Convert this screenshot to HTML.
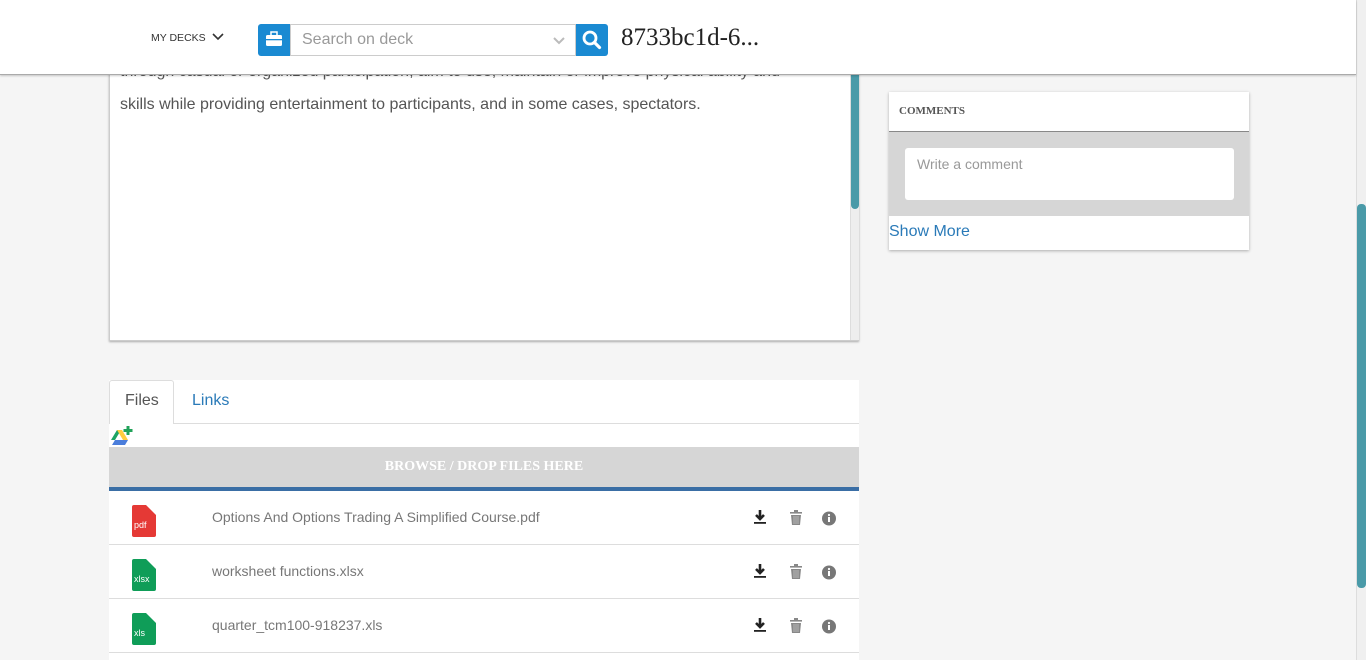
<!DOCTYPE html>
<html style="height:660px;overflow:hidden"><head><meta charset="utf-8"><style>
*{box-sizing:border-box;margin:0;padding:0}
body{width:1366px;height:660px;overflow:hidden;background:#f5f5f5;font-family:"Liberation Sans",sans-serif;position:relative}
.abs{position:absolute}
.hdr{left:0;top:0;width:1356px;height:75px;background:#fff;border-bottom:1px solid #aaa;box-shadow:0 1px 2px rgba(0,0,0,.2);z-index:5}
.ed{left:109px;top:40px;width:750px;height:301px;background:#fff;border:1px solid #ccc;box-shadow:0 1px 2px rgba(0,0,0,.3)}
.txt{font-size:16px;color:#555;white-space:nowrap}
.row{left:109px;width:750px;height:54px;background:#fff;border-bottom:1px solid #ddd}
.fn{left:103px;top:18px;font-size:14px;color:#777;position:absolute}
.ic{position:absolute;left:23px;top:14px;width:24px;height:32px;border-radius:2px;color:#fff;font-family:"Liberation Sans",sans-serif;font-size:9px;padding:15px 0 0 2px}
.ic:after{content:"";position:absolute;right:0;top:0;border-style:solid;border-width:0 10px 10px 0;border-color:transparent #fff transparent transparent}
</style></head><body>
<div class="abs hdr">
 <div class="abs" style="left:151px;top:32px;font-size:10.5px;color:#333">MY DECKS</div>
 <svg class="abs" style="left:212px;top:32px" width="12" height="10"><path d="M1 2l5 5 5-5" stroke="#333" stroke-width="1.6" fill="none"/></svg>
 <div class="abs" style="left:258px;top:24px;width:32px;height:32px;background:#1a8ad2;border-radius:3px 0 0 3px"></div>
 <svg class="abs" style="left:265px;top:31px" width="18" height="16"><rect x="1" y="4" width="16" height="11" rx="1.5" fill="#fff"/><rect x="6" y="1" width="6" height="4" fill="none" stroke="#fff" stroke-width="1.5"/><rect x="1" y="8" width="16" height="1.3" fill="#1a8ad2"/></svg>
 <div class="abs" style="left:290px;top:24px;width:286px;height:32px;border:1px solid #ccc;background:#fff"></div>
 <div class="abs" style="left:302px;top:31px;font-size:16px;color:#999">Search on deck</div>
 <svg class="abs" style="left:552px;top:36px" width="14" height="10"><path d="M2 2l5 5 5-5" stroke="#bbb" stroke-width="2" fill="none"/></svg>
 <div class="abs" style="left:576px;top:24px;width:32px;height:32px;background:#1a8ad2;border-radius:0 3px 3px 0"></div>
 <svg class="abs" style="left:581px;top:29px" width="22" height="22"><circle cx="9" cy="9" r="6" stroke="#fff" stroke-width="2.8" fill="none"/><path d="M13.5 13.5l5 5" stroke="#fff" stroke-width="3.2" stroke-linecap="round"/></svg>
 <div class="abs" style="left:621px;top:24px;font-size:25px;color:#222;font-family:'Liberation Serif',serif">8733bc1d-6...</div>
</div>
<div class="abs ed">
 <div class="abs txt" style="left:10px;top:22px">through casual or organized participation, aim to use, maintain or improve physical ability and</div>
 <div class="abs txt" style="left:10px;top:55px">skills while providing entertainment to participants, and in some cases, spectators.</div>
 <div class="abs" style="left:740px;top:0;width:9px;height:299px;background:#eee;border-left:1px solid #ddd"></div>
 <div class="abs" style="left:741px;top:0;width:8px;height:168px;background:#4a9aa8;border-radius:0 0 4px 4px"></div>
</div>
<div class="abs" style="left:109px;top:380px;width:750px;height:44px;background:#fff;border-bottom:1px solid #ddd"></div>
<div class="abs" style="left:109px;top:380px;width:65px;height:44px;background:#fff;border:1px solid #ddd;border-bottom:none;border-radius:3px 3px 0 0;z-index:1"></div>
<div class="abs" style="left:125px;top:392px;font-size:16px;color:#555;z-index:2">Files</div>
<div class="abs" style="left:192px;top:392px;font-size:16px;color:#2a7ab8">Links</div>
<div class="abs" style="left:109px;top:424px;width:750px;height:23px;background:#fff"></div>
<svg class="abs" style="left:109px;top:424px" width="24" height="24"><path d="M2 16l6-10 4 0-6 10z" fill="#1da462"/><path d="M8 6h5l6 10h-5z" fill="#ffcd40"/><path d="M6 16h13l-3 5H3z" fill="#4a7ddb"/><path d="M19 2v9M14.5 6.5h9" stroke="#21a25a" stroke-width="3"/></svg>
<div class="abs" style="left:109px;top:447px;width:750px;height:40px;background:#d6d6d6;color:#fff;font-family:'Liberation Serif',serif;font-weight:bold;font-size:14px;text-align:center;line-height:40px">BROWSE / DROP FILES HERE</div>
<div class="abs" style="left:109px;top:487px;width:750px;height:4px;background:#3a6ea5"></div>
<div class="abs row" style="top:491px"><div class="ic" style="background:#e53935">pdf</div><div class="fn">Options And Options Trading A Simplified Course.pdf</div></div>
<div class="abs row" style="top:545px"><div class="ic" style="background:#0f9d58">xlsx</div><div class="fn">worksheet functions.xlsx</div></div>
<div class="abs row" style="top:599px"><div class="ic" style="background:#0f9d58">xls</div><div class="fn">quarter_tcm100-918237.xls</div></div>
<div class="abs" style="left:109px;top:653px;width:750px;height:7px;background:#fff"></div>
<svg class="abs" style="left:750px;top:505px" width="100" height="140">
 <g id="r"><path d="M10 5v8M6 10l4 4 4-4" stroke="#222" stroke-width="2.6" fill="none"/><rect x="4" y="17" width="12" height="1.8" fill="#222"/>
 <rect x="40" y="7" width="12" height="1.6" fill="#888"/><rect x="44" y="5" width="4" height="2" fill="#888"/><path d="M41 10h10l-1 10h-8z" fill="#888"/><path d="M44 11v8M46 11v8M48 11v8" stroke="#ccc" stroke-width=".7"/>
 <circle cx="79" cy="13.5" r="7" fill="#777"/><rect x="78" y="12" width="2" height="5" fill="#fff"/><circle cx="79" cy="10" r="1.1" fill="#fff"/></g>
 <use href="#r" y="54"/><use href="#r" y="108"/>
</svg>
<div class="abs" style="left:889px;top:92px;width:360px;height:158px;background:#fff;box-shadow:0 1px 3px rgba(0,0,0,.3)">
 <div class="abs" style="left:10px;top:13px;font-family:'Liberation Serif',serif;font-weight:bold;font-size:11px;color:#555">COMMENTS</div>
 <div class="abs" style="left:0;top:39px;width:360px;height:85px;background:#d6d6d6;border-top:1px solid #888"></div>
 <div class="abs" style="left:16px;top:56px;width:329px;height:52px;background:#fff;border-radius:3px"></div>
 <div class="abs" style="left:28px;top:64px;font-size:14px;color:#999">Write a comment</div>
 <div class="abs" style="left:0;top:131px;font-size:16px;color:#2a7ab8">Show More</div>
</div>
<div class="abs" style="left:1356px;top:0;width:10px;height:660px;background:#f0f0f0;border-left:1px solid #ddd"></div>
<div class="abs" style="left:1357px;top:204px;width:9px;height:384px;background:#4a9aa8;border-radius:4px"></div>
</body></html>
